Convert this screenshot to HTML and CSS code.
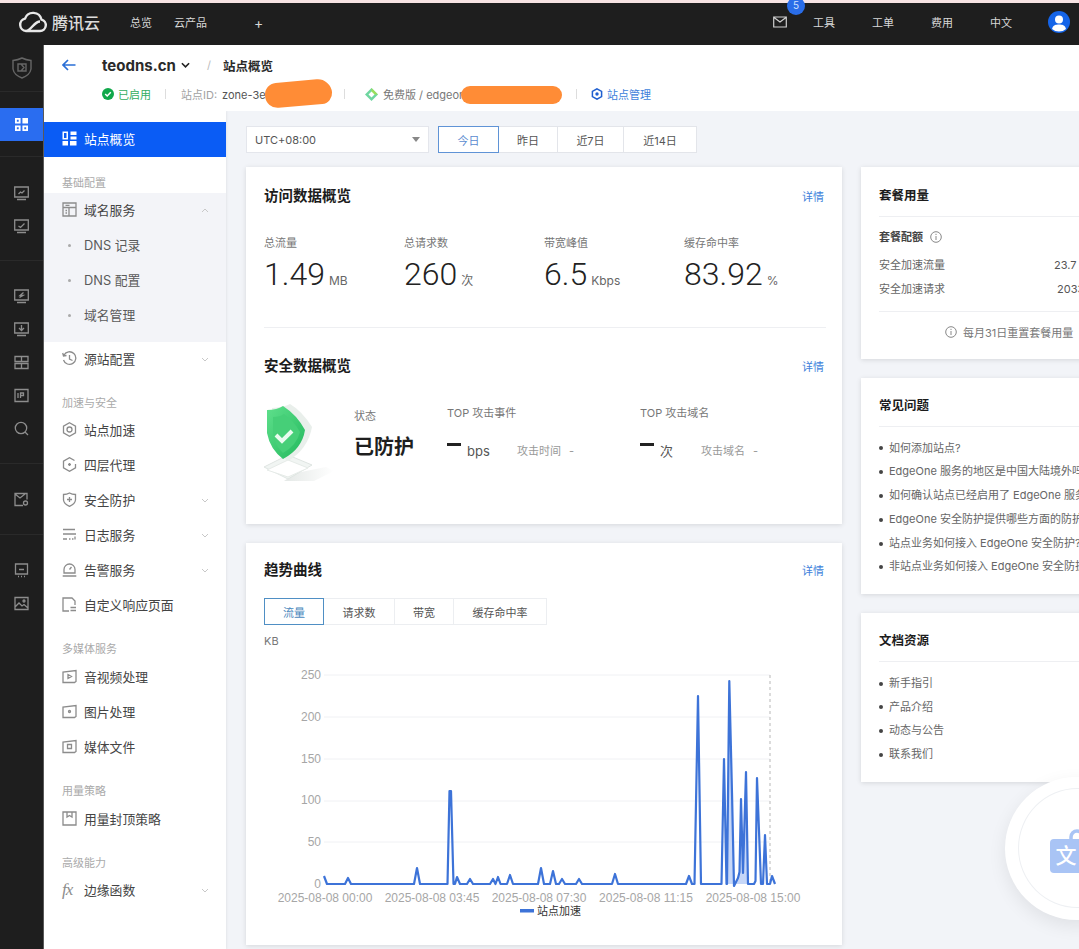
FILE: index.html
```html
<!DOCTYPE html>
<html lang="zh-CN">
<head>
<meta charset="utf-8">
<title>站点概览</title>
<link rel="stylesheet" href="styles.css">
</head>
<body>
<div class="strip"></div>
<header class="topbar">
  <svg class="logo" viewBox="0 0 30 22"><path d="M8 20H22A5.8 5.8 0 0 0 23.5 8.6A8.6 8.6 0 0 0 7 7.6A6.3 6.3 0 0 0 8 20C13 20 16 10.500 22 10.500" /></svg>
  <span class="brand">腾讯云</span>
  <a class="nav first">总览</a>
  <a class="nav second">云产品</a>
  <a class="nav plus">+</a>
  <div class="top-right">
    <span class="mail">
      <svg viewBox="0 0 14 12"><path d="M.7 1h12.600v10H.7zM1 1.500l6 4.500 6-4.500"/></svg>
      <b class="badge">5</b>
    </span>
    <a class="nav">工具</a><a class="nav">工单</a><a class="nav">费用</a><a class="nav">中文</a>
    <svg class="avatar" viewBox="0 0 22 22"><circle cx="11" cy="11" r="11" fill="#1464e8"/><circle cx="11" cy="8.500" r="4" fill="#fff"/><path d="M4 18c1-4 4-4.500 7-4.500s6 .5 7 4.500a11 11 0 0 1-14 0z" fill="#fff"/></svg>
  </div>
</header>
<div class="frame">
  <nav class="rail">
    <div class="rail-group head">
      <svg viewBox="0 0 20 22"><path d="M1 3.500Q6 3 10 1Q14 3 19 3.500V12Q18 18 10 21Q2 18 1 12Z"/><path d="M6 7h8v7H6zM9 7l3 3.500L9 14"/></svg>
    </div>
    <div class="rail-group active-wrap">
      <div class="rail-item active"><svg viewBox="0 0 14 14"><path d="M0 0h6v6H0zM8 0h6v6H8zM0 8h6v6H0zM8 8h6v6H8z" fill="#fff" stroke="none"/><path d="M2 2h2v2H2zM2 10h2v2H2zM10 10h2v2h-2z" fill="#2a6df0" stroke="none"/></svg></div>
    </div>
    <div class="rail-group shifted">
      <div class="rail-item"><svg viewBox="0 0 15 15"><path d="M.7 1h13.600v10H.7zM3 13.500h9M4.500 8l2-2 1.500 1L10.500 4.500"/></svg></div>
      <div class="rail-item"><svg viewBox="0 0 15 15"><path d="M.7 1h13.600v10H.7zM3 13.500h9M4.500 7l2 1.500L10.500 4.500"/></svg></div>
    </div>
    <div class="rail-group">
      <div class="rail-item"><svg viewBox="0 0 15 15"><path d="M.7 1h13.600v10H.7zM3 13.500h9M9.500 3.500L6 6.500h3L5.500 8.500"/></svg></div>
      <div class="rail-item"><svg viewBox="0 0 15 15"><path d="M.7 1h13.600v10H.7zM3 13.500h9M7.500 3v5M5 6l2.500 2.500L10 6"/></svg></div>
      <div class="rail-item"><svg viewBox="0 0 15 15"><path d="M1 1.500h13v5H1zM1 8.500h13v5H1zM7.500 1.500v5M7.500 8.500v5"/></svg></div>
      <div class="rail-item"><svg viewBox="0 0 15 15"><path d="M1 1.500h13v12H1zM4 5v5M6.500 10V5H9.500V7.500H6.500"/></svg></div>
      <div class="rail-item"><svg viewBox="0 0 15 15"><circle cx="7" cy="7" r="5.700"/><path d="M11 11l3 3"/></svg></div>
    </div>
    <div class="rail-group">
      <div class="rail-item"><svg viewBox="0 0 15 15"><path d="M9 13.500H1v-12h12v6M1 2l5 4 5-4"/><circle cx="11.500" cy="11" r="2"/></svg></div>
    </div>
    <div class="rail-group last">
      <div class="rail-item"><svg viewBox="0 0 15 15"><path d="M1.500 1h12v10h-12zM5 6.500h5M4 13.500h1M7 13.500h1M10 13.500h1"/></svg></div>
      <div class="rail-item"><svg viewBox="0 0 15 15"><path d="M1 1.500h13v12H1zM1 11l4-4 3 3 2-1.500 4 3.500"/><circle cx="10" cy="5" r="1"/></svg></div>
    </div>
  </nav>
  <div class="workspace">
    <section class="site-head">
      <div class="head-row">
        <svg class="back" viewBox="0 0 14 12"><path d="M13.500 6H1M6 1L1 6l5 5"/></svg>
        <span class="site-name">teodns.cn</span>
        <svg class="site-caret" viewBox="0 0 10 6"><path d="M1 1l4 4 4-4"/></svg>
        <span class="slash">/</span>
        <span class="crumb">站点概览</span>
      </div>
      <div class="meta-row">
        <svg class="m-ic" viewBox="0 0 12 12"><circle cx="6" cy="6" r="6" fill="#10a84a"/><path d="M3.200 6l2 2 3.600-3.800" fill="none" stroke="#fff" stroke-width="1.500"/></svg>
        <span class="status">已启用</span>
        <i class="sep"></i>
        <span class="site-id"><span class="id-label">站点ID:</span>zone-3e</span>
        <i class="sep"></i>
        <svg class="m-ic plan" viewBox="0 0 13 13"><path d="M6.500 0L13 6.500 6.500 13 0 6.500z" fill="#6fd6a0"/><path d="M6.500 0L13 6.500 6.500 6.500z" fill="#9adf5a"/><path d="M3.500 6.500l3-3 3 3-3 3z" fill="#fff"/></svg>
        <span class="plan-text">免费版 / edgeor</span>
        <i class="sep"></i>
        <svg class="m-ic manage" viewBox="0 0 12 12"><path d="M6 .8l4.600 2.600v5.200L6 11.200 1.400 8.600V3.400z" fill="none" stroke="#1f5fd0" stroke-width="1.500"/><circle cx="6" cy="6" r="1.700" fill="#1f5fd0"/></svg>
        <a class="link">站点管理</a>
      </div>
      <span class="blob blob-a"></span>
      <span class="blob blob-b"></span>
    </section>
    <div class="below">
      <aside class="menu">
        <a class="item current"><svg viewBox="0 0 15 15"><path d="M.5.500h5.500v8H.5z M2 2v5h2.500V2z" fill-rule="evenodd"/><path d="M8.500.500h6v3.500h-6zM8.500 5.500h6v3h-6zM.5 10h5.500v4.500H.5zM8 10h6.500v4.500H8z"/></svg>站点概览</a>
        <div class="group">基础配置</div>
        <div class="open">
          <a class="item"><svg viewBox="0 0 15 15"><path d="M1 1h13v13H1zM1 5.500h13M7 5.500V14M3.500 3.300h4M3.500 8.500h1.500M3.500 11h1.500"/></svg>域名服务<svg class="chev" viewBox="0 0 8 5"><path d="M1 4l3-3 3 3"/></svg></a>
          <a class="item sub">DNS 记录</a>
          <a class="item sub">DNS 配置</a>
          <a class="item sub">域名管理</a>
        </div>
        <a class="item"><svg viewBox="0 0 15 15"><path d="M2 4A6.300 6.300 0 1 1 1.500 9M.7 2l.8 3 3-.5M7.500 4v4l3 1.500"/></svg>源站配置<svg class="chev" viewBox="0 0 8 5"><path d="M1 1l3 3 3-3"/></svg></a>
        <div class="group">加速与安全</div>
        <a class="item"><svg viewBox="0 0 15 15"><path d="M7.500.8l6 3.400v6.600l-6 3.400-6-3.400V4.200z"/><circle cx="7.500" cy="7.500" r="2.500"/></svg>站点加速</a>
        <a class="item"><svg viewBox="0 0 15 15"><path d="M12.500 3.500l-5-2.800-6 3.400v6.800l6 3.400 6-3.400V7M6 7.500h3M7.500 6v3"/></svg>四层代理</a>
        <a class="item"><svg viewBox="0 0 15 15"><path d="M1.500 2.500Q5 2.500 7.500 1 10 2.500 13.500 2.500V8Q13 12 7.500 14.300 2 12 1.500 8zM5 7.500h5M7.500 5v5"/></svg>安全防护<svg class="chev" viewBox="0 0 8 5"><path d="M1 1l3 3 3-3"/></svg></a>
        <a class="item"><svg viewBox="0 0 15 15"><path d="M1 2.500h12M1 7h13M1 12h4M7 12h1.500M10 12h1.500M13 9.500v3"/></svg>日志服务<svg class="chev" viewBox="0 0 8 5"><path d="M1 1l3 3 3-3"/></svg></a>
        <a class="item"><svg viewBox="0 0 15 15"><path d="M2 11V7.500a5.500 5.500 0 0 1 11 0V11zM.7 14h13.600M7.500 7.500l2-2.500"/></svg>告警服务<svg class="chev" viewBox="0 0 8 5"><path d="M1 1l3 3 3-3"/></svg></a>
        <a class="item"><svg viewBox="0 0 15 15"><path d="M7 14H1V1h9l3 3v4M8.500 10.500H14M8.500 13.500H14"/></svg>自定义响应页面</a>
        <div class="group tall-label">多媒体服务</div>
        <a class="item"><svg viewBox="0 0 15 15"><path d="M14 4V1.500L1 3v10.500h11.500L14 12.500V4M6 5.500v4l3.500-2z"/></svg>音视频处理</a>
        <a class="item"><svg viewBox="0 0 15 15"><path d="M14 4V1.500L1 3v10.500h11.500L14 12.500V4"/><circle cx="7.500" cy="7.500" r="1"/></svg>图片处理</a>
        <a class="item"><svg viewBox="0 0 15 15"><path d="M14 4V1.500L1 3v10.500h11.500L14 12.500V4M5.500 5.500h4v4h-4z"/></svg>媒体文件</a>
        <div class="group tall-label">用量策略</div>
        <a class="item"><svg viewBox="0 0 15 15"><path d="M1 1h13v13H1zM5 1v5l2.500-1.500L10 6V1"/></svg>用量封顶策略</a>
        <div class="group">高级能力</div>
        <a class="item"><span class="fx">fx</span>边缘函数<svg class="chev" viewBox="0 0 8 5"><path d="M1 1l3 3 3-3"/></svg></a>
      </aside>
      <main class="content">
        <div class="filters">
          <div class="select">UTC+08:00<i class="caret"></i></div>
          <div class="ranges">
            <a class="range on">今日</a><a class="range r2">昨日</a><a class="range r3">近7日</a><a class="range r4">近14日</a>
          </div>
        </div>
        <div class="columns">
          <div class="col-main">
            <section class="card overview">
              <div class="card-head"><h2>访问数据概览</h2><a class="link">详情</a></div>
              <div class="metrics">
                <div class="metric"><span class="m-label">总流量</span><div class="m-val">1.49<small>MB</small></div></div>
                <div class="metric"><span class="m-label">总请求数</span><div class="m-val">260<small>次</small></div></div>
                <div class="metric"><span class="m-label">带宽峰值</span><div class="m-val">6.5<small>Kbps</small></div></div>
                <div class="metric"><span class="m-label">缓存命中率</span><div class="m-val">83.92<small>%</small></div></div>
              </div>
              <div class="divider"></div>
              <div class="card-head tall"><h2>安全数据概览</h2><a class="link">详情</a></div>
              <div class="security">
                <svg class="shield" viewBox="0 0 72 80">
                  <defs>
                    <linearGradient id="sg" x1="0" y1="0" x2="1" y2="1"><stop offset="0" stop-color="#5fe08c"/><stop offset="1" stop-color="#22b85c"/></linearGradient>
                    <linearGradient id="bs" x1="0" y1="0" x2="1" y2="0"><stop offset="0" stop-color="#e4e8e6"/><stop offset="1" stop-color="#fff"/></linearGradient>
                  </defs>
                  <path d="M32 70l30-6 8 4-20 10H20z" fill="url(#bs)"/>
                  <path d="M0 64L24 52 48 62 24 76z" fill="#f1f5f3" stroke="#dfe5e2"/>
                  <path d="M3 67L24 57 44 65 24 74z" fill="#fff" stroke="#e6ebe8"/>
                  <path d="M8 5Q20 4 26 1Q38 8 48 24Q44 46 24 58Q10 48 6 30Z" fill="#e9efeb"/>
                  <path d="M3 7Q13 7 19 3Q33 12 41 27Q38 46 19 56Q6 46 3 30Z" fill="url(#sg)"/>
                  <path d="M9 14Q16 14 20 11Q30 18 36 29Q33 42 19 50Q10 42 9 30Z" fill="#46cf78"/>
                  <path d="M12 32l6 6 10-10" fill="none" stroke="#e9fbef" stroke-width="4"/>
                </svg>
                <div class="sec-state"><span class="m-label">状态</span><strong>已防护</strong></div>
                <div class="sec-top wide">
                  <span class="m-label">TOP 攻击事件</span>
                  <div class="sec-val"><i class="dash"></i><span class="unit">bps</span><span class="hint">攻击时间</span><span class="hint-v">-</span></div>
                </div>
                <div class="sec-top">
                  <span class="m-label">TOP 攻击域名</span>
                  <div class="sec-val"><i class="dash"></i><span class="unit">次</span><span class="hint">攻击域名</span><span class="hint-v">-</span></div>
                </div>
              </div>
            </section>
            <section class="card trend">
              <div class="card-head short"><h2>趋势曲线</h2><a class="link">详情</a></div>
              <div class="tabs"><a class="tab t1 on">流量</a><a class="tab t2">请求数</a><a class="tab t3">带宽</a><a class="tab t4">缓存命中率</a></div>
              <div class="axis-unit">KB</div>
              <svg class="chart" viewBox="264 650 562 280">
                <g class="grid"><path d="M324 675H770M324 717H770M324 759H770M324 801H770M324 842H770"/></g>
                <path class="now" d="M770 675V884"/>
                <polygon class="area" points="727,884 729.300,681 732,793 734,886 738,878 739.500,872 741,799 743,873 746,772 748,884"/>
                <polyline class="line" points="324,876 327,884 345,884 348,878 351,884 414,884 417,868 420,884 447.500,884 449.500,791 451,791 453.500,884 455,884 457,877 460,884 467,884 470,879 473,884 490,884 493,879 495.500,884 498,877 500.500,884 507,884 510,875 513,884 538,884 541,868 544,884 550,884 553,871 556,884 559,884 562,879 565,884 576,884 579,879 582,884 612,884 615,874 618,884 686,884 689,876 692,884 694.500,884 698,696 701,884 721.500,884 724,759 726.500,884 727,884 729.300,681 732,793 734,886 738,878 739.500,872 741,799 743,873 746,772 748,884 754,884 755.500,881 757,778 761,884 763,884 765,835 767,884 770,884 772,876 775,884"/>
                <g class="ylab">
                  <text x="321" y="679">250</text><text x="321" y="721">200</text><text x="321" y="763">150</text><text x="321" y="804">100</text><text x="321" y="846">50</text><text x="321" y="888">0</text>
                </g>
                <g class="xlab">
                  <text x="325" y="902">2025-08-08 00:00</text><text x="432" y="902">2025-08-08 03:45</text><text x="539" y="902">2025-08-08 07:30</text><text x="646" y="902">2025-08-08 11:15</text><text x="753" y="902">2025-08-08 15:00</text>
                </g>
                <rect class="legend-key" x="520" y="909" width="14" height="3.500"/>
                <text class="legend" x="537" y="915">站点加速</text>
              </svg>
            </section>
          </div>
          <div class="col-side">
            <section class="card side quota">
              <h2 class="side-head">套餐用量</h2>
              <div class="quota-title">套餐配额<svg class="info" viewBox="0 0 12 12"><circle cx="6" cy="6" r="5.300"/><path d="M6 5v4M6 2.800v1.200"/></svg></div>
              <div class="q-row">安全加速流量<span class="q-val">23.7</span></div>
              <div class="q-row">安全加速请求<span class="q-val alt">2033</span></div>
              <div class="q-foot"><svg class="info" viewBox="0 0 12 12"><circle cx="6" cy="6" r="5.300"/><path d="M6 5v4M6 2.800v1.200"/></svg>每月31日重置套餐用量</div>
            </section>
            <section class="card side">
              <h2 class="side-head">常见问题</h2>
              <ul class="dots">
                <li>如何添加站点?</li>
                <li>EdgeOne 服务的地区是中国大陆境外吗?</li>
                <li>如何确认站点已经启用了 EdgeOne 服务?</li>
                <li>EdgeOne 安全防护提供哪些方面的防护?</li>
                <li>站点业务如何接入 EdgeOne 安全防护?</li>
                <li>非站点业务如何接入 EdgeOne 安全防护?</li>
              </ul>
            </section>
            <section class="card side">
              <h2 class="side-head">文档资源</h2>
              <ul class="dots">
                <li>新手指引</li><li>产品介绍</li><li>动态与公告</li><li>联系我们</li>
              </ul>
            </section>
          </div>
        </div>
      </main>
    </div>
  </div>
</div>
<div class="translate">
  <div class="translate-in">
    <svg viewBox="0 0 34 50"><path d="M21 16V12a6 6 0 0 1 12 0v4" fill="none" stroke="#a9c4f5" stroke-width="3.500"/><rect y="14" width="40" height="34" rx="4" fill="#a9c4f5"/><text x="16" y="38" class="wen">文</text></svg>
  </div>
</div>
</body>
</html>
```

FILE: styles.css
```css
* { box-sizing: border-box; }
html, body { margin: 0; height: 100%; }
body {
  width: 1079px; height: 949px; overflow: hidden; position: relative;
  background: #f2f4f8; color: #333;
  font-family: Inter, "Noto Sans CJK SC", sans-serif; font-size: 11px;
  display: flex; flex-direction: column;
}
a { color: inherit; text-decoration: none; }
h2 { margin: 0; font-size: 14.500px; line-height: 18px; font-weight: 700; color: #1c1c1c; }
i { font-style: normal; display: block; }
svg { display: block; flex: none; }

.strip { height: 3px; background: #f7e3e3; flex: none; }
.topbar { height: 42px; background: #1e1e1e; flex: none; display: flex; align-items: center; padding: 0 9px 4px 18px; color: #d8d8d8; }
.logo { width: 30px; height: 22px; fill: none; stroke: #e8e8e8; stroke-width: 2.400; }
.brand { font-size: 16px; margin-left: 4px; color: #dcdcdc; font-weight: 500; width: 48px; letter-spacing: 0; }
.nav { font-size: 11px; width: 22px; white-space: nowrap; }
.nav.first { margin-left: 30px; }
.nav.second { margin-left: 22px; width: 33px; }
.nav.plus { margin-left: 47px; font-size: 14px; width: 10px; }
.top-right { margin-left: auto; display: flex; align-items: center; gap: 37px; }
.mail { position: relative; width: 14px; margin-right: -11px; }
.mail svg { width: 14px; height: 12px; fill: none; stroke: #cfcfcf; stroke-width: 1.200; }
.badge { position: absolute; left: 14px; top: -19px; width: 18px; height: 18px; border-radius: 50%; background: #2a6de8; color: #cfe0ff; font-size: 10px; font-weight: 400; text-align: center; line-height: 17px; }
.avatar { width: 22px; height: 22px; margin-left: -1px; }

.frame { flex: 1; display: flex; min-height: 0; }
.rail { width: 44px; flex: none; background: #1e1e1e; border-right: 1px solid #5a5a5a; }
.rail-group { padding: 19px 0 18px; border-bottom: 1px solid #2a2a2a; }
.rail-group.shifted { padding: 20px 0 17px; }
.rail-group.head { height: 47px; padding: 12px 0 0 12px; }
.rail-group.head svg { width: 20px; height: 22px; fill: none; stroke: #666; stroke-width: 1.400; }
.rail-group.active-wrap { padding: 16px 0 15px; }
.rail-group.last { border-bottom: 0; }
.rail-item { height: 33px; display: flex; align-items: center; justify-content: center; padding-right: 1px; }
.rail-item svg { width: 15px; height: 15px; fill: none; stroke: #8d8d8d; stroke-width: 1.300; }
.rail-item.active { background: #2a6df0; }
.rail-item.active svg { width: 13px; height: 13px; }

.workspace { flex: 1; min-width: 0; display: flex; flex-direction: column; }
.site-head { height: 66px; flex: none; background: #fff; padding: 9px 0 0 18px; position: relative; }
.head-row { display: flex; align-items: center; height: 22px; }
.back { width: 14px; height: 12px; fill: none; stroke: #2a6fd6; stroke-width: 1.700; margin-right: 26px; }
.site-name { font-size: 15px; font-weight: 700; color: #2a2a2a; width: 71px; white-space: nowrap; }
.site-caret { width: 9px; height: 6px; margin-left: 8px; fill: none; stroke: #222; stroke-width: 1.800; }
.slash { margin-left: 17px; color: #bbb; width: 16px; }
.crumb { font-size: 12.500px; font-weight: 700; color: #2b2b2b; }
.meta-row { display: flex; align-items: center; height: 22px; margin-top: 7px; padding-left: 40px; color: #777; }
.m-ic { width: 12px; height: 12px; }
.m-ic.plan { width: 13px; height: 13px; margin-left: 5px; }
.m-ic.manage { margin-left: -1px; margin-right: 4px; }
.status { color: #32ad5f; margin-left: 4px; margin-right: -1px; width: 33px; white-space: nowrap; }
.sep { width: 1px; height: 10px; background: #ddd; margin: 0 15px; }
.site-id { width: 148px; white-space: nowrap; color: #555; }
.id-label { color: #a2a2a2; margin-right: 5px; }
.plan-text { margin-left: 5px; width: 178px; white-space: nowrap; }
.link { color: #3d7fdb; font-size: 11px; white-space: nowrap; }
.card-head .link { margin-right: 2px; }
.blob { position: absolute; background: #ff8c36; }
.blob-a { left: 221px; top: 36px; width: 67px; height: 25px; border-radius: 13px 16px 12px 14px; transform: rotate(-5deg); }
.blob-b { left: 417px; top: 41px; width: 101px; height: 18px; border-radius: 9px; }

.below { flex: 1; display: flex; min-height: 0; }
.menu { width: 182px; flex: none; background: #fff; padding-top: 11px; box-shadow: 1px 0 2px rgba(0,0,0,.06); color: #444; }
.item { height: 35px; display: flex; align-items: center; padding: 0 0 2px 18px; font-size: 12.800px; position: relative; white-space: nowrap; }
.item > svg:first-child { width: 15px; height: 15px; margin-right: 7px; fill: none; stroke: #8c8c8c; stroke-width: 1.300; }
.item.current { background: #0a5cf5; color: #fff; }
.item.current > svg:first-child { fill: #fff; stroke: none; }
.chev { position: absolute; left: 157px; top: 15px; width: 8px; height: 5px; fill: none; stroke: #c8c8c8; stroke-width: 1; }
.group { height: 21px; margin-top: 15px; padding-left: 18px; line-height: 22px; color: #aaa; font-size: 11px; }
.group.tall-label { height: 22px; }
.open { background: #f3f4f8; padding-bottom: 9px; }
.item.sub { padding-left: 40px; color: #5a5a5a; }
.item.sub::before { content: ""; position: absolute; left: 24px; top: 16px; width: 3px; height: 3px; border-radius: 50%; background: #aaa; }
.fx { width: 15px; margin-right: 7px; font-family: "Liberation Serif", serif; font-style: italic; font-size: 17px; color: #8c8c8c; letter-spacing: -1px; }

.content { flex: 1; min-width: 0; padding: 15px 0 0 20px; overflow: hidden; }
.filters { display: flex; height: 27px; margin-bottom: 14px; }
.select { width: 183px; height: 27px; background: #fff; border: 1px solid #e4e6ec; display: flex; align-items: center; justify-content: space-between; padding: 0 8px; color: #555; font-size: 11px; }
.caret { border: 4px solid transparent; border-top: 5px solid #888; border-bottom: 0; }
.ranges { display: flex; margin-left: 9px; }
.range { height: 27px; width: 61px; background: #fff; border: 1px solid #e3e5ea; border-left: 0; display: flex; align-items: center; justify-content: center; color: #555; font-size: 11px; }
.range.on { border: 1.500px solid #5f93d6; color: #5a8bd0; }
.range.r2 { width: 59px; }
.range.r3 { width: 66px; }
.range.r4 { width: 73px; }

.columns { display: flex; gap: 19px; width: 900px; }
.col-main { width: 596px; flex: none; display: flex; flex-direction: column; gap: 19px; }
.col-side { width: 300px; flex: none; display: flex; flex-direction: column; gap: 18.500px; }
.card { background: #fff; box-shadow: 0 1px 5px rgba(0,0,0,.12); padding: 0 16px 0 18px; }
.overview { height: 357px; }
.trend { height: 402px; }
.card-head { height: 58px; display: flex; align-items: center; justify-content: space-between; }
.card-head.tall { height: 76px; }
.card-head.short { height: 54px; }
.metrics { display: grid; grid-template-columns: repeat(4, 140px); margin-top: 11px; }
.m-label { display: block; color: #777; font-size: 11px; line-height: 14px; white-space: nowrap; }
.m-val { font-family: Roboto, sans-serif; font-size: 32px; font-weight: 300; line-height: 40px; margin-top: 4px; color: #222; white-space: nowrap; }
.m-val small { font-family: Inter, "Noto Sans CJK SC", sans-serif; font-size: 12px; font-weight: 400; color: #666; margin-left: 4px; }
.divider { height: 1px; background: #eeeff2; margin-top: 26px; }
.security { display: flex; }
.shield { width: 72px; height: 80px; margin-top: -1px; margin-right: 18px; }
.sec-state { width: 93px; padding-top: 5px; }
.sec-state strong { display: block; font-size: 20px; line-height: 30px; margin-top: 9px; font-weight: 700; color: #1f1f1f; }
.sec-top { width: 186px; padding-top: 2px; }
.sec-top.wide { width: 193px; }
.sec-val { display: flex; align-items: flex-end; margin-top: 16px; height: 23px; }
.dash { width: 14px; height: 3px; background: #222; align-self: flex-start; margin-top: 7px; }
.unit { font-size: 13px; line-height: 16px; margin-left: 6px; color: #555; width: 23px; }
.hint { color: #999; margin-left: 27px; line-height: 16px; width: 43px; white-space: nowrap; }
.hint-v { color: #999; margin-left: 9px; line-height: 16px; }
.sec-top:not(.wide) .unit { width: 14px; }
.tabs { display: flex; margin-top: 1px; height: 27px; }
.tab { height: 27px; background: #fff; border: 1px solid #eceef1; border-left: 0; display: flex; align-items: center; justify-content: center; color: #555; font-size: 11px; }
.tab.on { border: 1.200px solid #4f8fc4; color: #4a88bd; }
.t1 { width: 60px; } .t2 { width: 71px; } .t3 { width: 59px; } .t4 { width: 93px; }
.axis-unit { color: #777; line-height: 14px; margin-top: 9px; }
.chart { width: 562px; height: 280px; margin-top: 2px; font-family: "Liberation Sans", "Noto Sans CJK SC", sans-serif; }
.grid path { stroke: #f0f1f4; stroke-width: 1; fill: none; }
.now { stroke: #c4c4c4; stroke-width: 1.200; stroke-dasharray: 3 3; fill: none; }
.area { fill: #c6d7f8; }
.line { fill: none; stroke: #3d73d8; stroke-width: 2.200; stroke-linejoin: round; }
.ylab text { text-anchor: end; fill: #a6a6a6; font-size: 12px; }
.xlab text { text-anchor: middle; fill: #a6a6a6; font-size: 12px; }
.legend-key { fill: #3d73d8; }
.legend { font-size: 11px; fill: #333; font-family: "Noto Sans CJK SC", sans-serif; }

.side { padding: 0 0 0 18px; }
.quota { height: 192px; }
.side-head { font-size: 12.500px; height: 49px; padding-top: 19px; border-bottom: 1px solid #eeeff2; }
.quota .side-head { height: 50px; padding-top: 20px; }
.quota-title { display: flex; align-items: center; gap: 7px; font-weight: 700; color: #444; line-height: 14px; margin-top: 13px; margin-bottom: 9px; }
.info { width: 12px; height: 12px; fill: none; stroke: #888; stroke-width: 1; }
.q-row { display: flex; line-height: 24px; color: #666; height: 24px; white-space: nowrap; }
.q-val { margin-left: 109px; color: #555; }
.q-val.alt { margin-left: 112px; }
.q-foot { border-top: 1px solid #eeeff2; margin-top: 10px; height: 41px; display: flex; align-items: center; gap: 6px; padding-left: 66px; color: #777; white-space: nowrap; }
.dots { list-style: none; margin: 0; padding: 10px 0 15px; }
.dots li { display: flex; align-items: center; line-height: 23.800px; height: 23.800px; color: #666; white-space: nowrap; }
.dots li::before { content: ""; width: 4px; height: 4px; border-radius: 50%; background: #444; margin-right: 6px; flex: none; }

.translate { position: absolute; left: 1005px; top: 777px; width: 143px; height: 143px; border-radius: 50%; background: #fff; box-shadow: 0 6px 18px rgba(0,0,0,.08); padding: 11px 0 0 13px; }
.translate-in { width: 119px; height: 120px; border-radius: 50%; border: 1px solid #eef0f3; padding: 36px 0 0 31px; }
.translate-in svg { width: 34px; height: 50px; }
.wen { fill: #fff; font-size: 21px; font-weight: 500; text-anchor: middle; font-family: "Noto Sans CJK SC", sans-serif; }
```
